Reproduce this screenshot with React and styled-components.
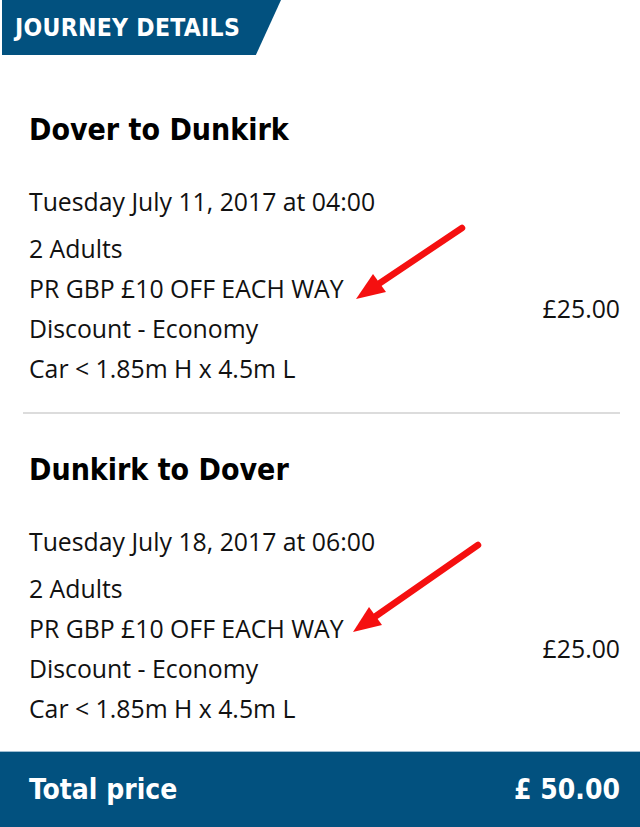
import React from "react";
import styled, { createGlobalStyle } from "styled-components";

const GlobalStyle = createGlobalStyle`
  body {
    margin: 0;
    background: #fff;
    font-family: "Open Sans", "Liberation Sans", sans-serif;
    color: #111;
  }
`

const Page = styled.div`
  position: relative;
  width: 640px;
  height: 827px;
  display: flex;
  flex-direction: column;
  overflow: hidden;
`

const TabBar = styled.div`
  height: 55px;
  display: flex;
`

const Tab = styled.div`
  width: 279px;
  height: 55px;
  margin-left: 2px;
  background: #02517f;
  clip-path: polygon(0 0, 100% 0, 91% 100%, 0 100%);
  display: flex;
  align-items: center;
  padding-left: 13px;
  box-sizing: border-box;
  color: #fff;
  font-family: "DejaVu Sans Condensed", "DejaVu Sans", sans-serif;
  font-weight: bold;
  font-size: 24.5px;
  letter-spacing: 0.3px;
`

const Content = styled.div`
  flex: 1;
  padding: 0 20px 0 29px;
`

const Journey = styled.section`
  padding-top: ${(p) => p.$top}px;
`

const Heading = styled.h2`
  margin: 0;
  height: 40px;
  line-height: 40px;
  font-family: "DejaVu Sans Condensed", "DejaVu Sans", sans-serif;
  font-weight: bold;
  font-size: 30px;
  color: #000;
`

const Line = styled.div`
  height: 40px;
  line-height: 40px;
  font-size: 24.8px;
  white-space: nowrap;
`

const DateLine = styled(Line)`
  margin-top: 31px;
`

const Row = styled.div`
  margin-top: 7px;
  display: flex;
  align-items: center;
  justify-content: space-between;
`

const Details = styled.div`
  display: flex;
  flex-direction: column;
`

const Price = styled.div`
  font-size: 24.8px;
`

const Divider = styled.hr`
  margin: 24px 0 0 -6px;
  border: none;
  height: 2px;
  background: #dcdcdc;
`

const TotalBar = styled.div`
  height: 76px;
  box-sizing: border-box;
  background: #02517f;
  border-top: 1px solid #9fbdd2;
  display: flex;
  align-items: center;
  justify-content: space-between;
  padding: 0 20px 0 29px;
  color: #fff;
  font-family: "DejaVu Sans Condensed", "DejaVu Sans", sans-serif;
  font-weight: bold;
  font-size: 28px;
`

const Overlay = styled.svg`
  position: absolute;
  left: 0;
  top: 0;
  pointer-events: none;
`

const journeys = [
  { title: "Dover to Dunkirk", date: "Tuesday July 11, 2017 at 04:00", top: 55 },
  { title: "Dunkirk to Dover", date: "Tuesday July 18, 2017 at 06:00", top: 36 },
];

const Arrow = ({ tail, tip, base, left, right }) => (
  <g>
    <line x1={tail[0]} y1={tail[1]} x2={base[0]} y2={base[1]} stroke="#f51010" strokeWidth="6.5" strokeLinecap="round" />
    <polygon points={`${tip[0]},${tip[1]} ${left[0]},${left[1]} ${right[0]},${right[1]}`} fill="#f51010" />
  </g>
);

const App = () => {
  return (
    <Page>
      <GlobalStyle />
      <TabBar>
        <Tab>JOURNEY DETAILS</Tab>
      </TabBar>
      <Content>
        {journeys.map((j, i) => (
          <React.Fragment key={j.title}>
            {i > 0 && <Divider />}
            <Journey $top={j.top}>
              <Heading>{j.title}</Heading>
              <DateLine>{j.date}</DateLine>
              <Row>
                <Details>
                  <Line>2 Adults</Line>
                  <Line>PR GBP £10 OFF EACH WAY</Line>
                  <Line>Discount - Economy</Line>
                  <Line>Car &lt; 1.85m H x 4.5m L</Line>
                </Details>
                <Price>£25.00</Price>
              </Row>
            </Journey>
          </React.Fragment>
        ))}
      </Content>
      <TotalBar>
        <span>Total price</span>
        <span>£ 50.00</span>
      </TotalBar>
      <Overlay width="640" height="827" viewBox="0 0 640 827">
        <Arrow tail={[462, 228]} tip={[356, 299]} base={[380, 283]} left={[386, 292]} right={[373, 274]} />
        <Arrow tail={[478, 545]} tip={[353, 632]} base={[376, 616]} left={[382, 625]} right={[369, 607]} />
      </Overlay>
    </Page>
  );
};

export default App;
